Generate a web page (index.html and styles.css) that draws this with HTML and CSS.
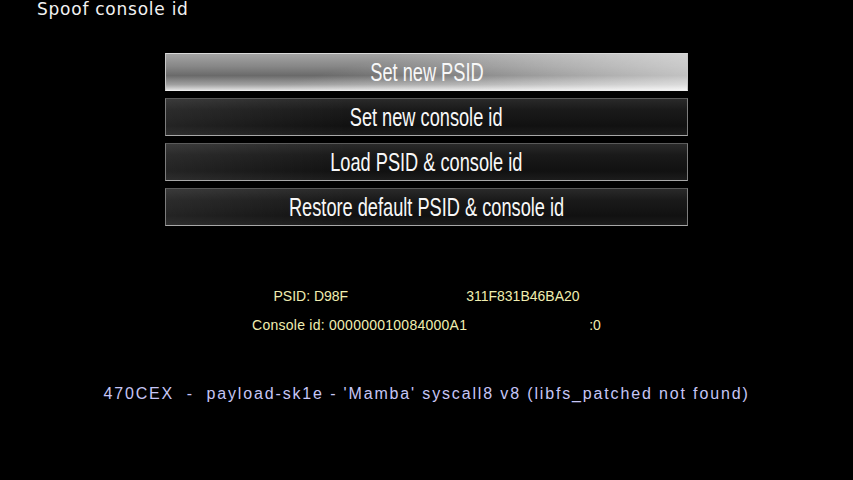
FILE: index.html
```html
<!DOCTYPE html>
<html>
<head>
<meta charset="utf-8">
<link rel="stylesheet" href="styles.css">
</head>
<body>
<div class="screen">
  <div class="title">Spoof console id</div>
  <div class="menu">
    <div class="item selected"><span class="label">Set new PSID</span></div>
    <div class="item"><span class="label">Set new console id</span></div>
    <div class="item"><span class="label">Load PSID &amp; console id</span></div>
    <div class="item"><span class="label">Restore default PSID &amp; console id</span></div>
  </div>
  <div class="info">
    <div class="row psid"><span>PSID: D98F</span><span>311F831B46BA20</span></div>
    <div class="row cid"><span>Console id: 000000010084000A1</span><span>:0</span></div>
  </div>
  <div class="status">470CEX  -  payload-sk1e - 'Mamba' syscall8 v8 (libfs_patched not found)</div>
</div>
</body>
</html>
```
FILE: styles.css
```css
html, body {
  margin: 0;
  padding: 0;
  background: #000;
}
.screen {
  width: 853px;
  height: 480px;
  background: #000;
  overflow: hidden;
  display: flex;
  flex-direction: column;
}
.title {
  font-family: "DejaVu Sans", sans-serif;
  font-size: 17px;
  line-height: 17px;
  color: #f2f2f2;
  padding: 1px 0 0 37px;
  letter-spacing: 0.75px;
}
.menu {
  margin-top: 35px;
  display: flex;
  flex-direction: column;
  align-items: center;
  gap: 7px;
}
.item {
  box-sizing: border-box;
  width: 523px;
  height: 38px;
  border: 1px solid #7c7c7c;
  border-bottom-color: #a8a8a8;
  border-top-color: #5a5a5a;
  background:
    linear-gradient(90deg, rgba(255,255,255,0.08) 0%, rgba(255,255,255,0) 35%),
    linear-gradient(180deg, #2a2a2a 0%, #1a1a1a 30%, #111 75%, #1c1c1c 100%);
  display: flex;
  align-items: center;
  justify-content: center;
}
.item.selected {
  border-color: #c8c8c8;
  border-top-color: #d8d8d8;
  border-bottom-color: #ececec;
  background:
    linear-gradient(165deg, rgba(255,255,255,0) 0%, rgba(255,255,255,0) 35%, rgba(255,255,255,0.55) 100%),
    linear-gradient(90deg, rgba(255,255,255,0) 55%, rgba(255,255,255,0.22) 100%),
    linear-gradient(180deg, #a4a4a4 0%, #868686 35%, #6a6a6a 60%, #a0a0a0 85%, #dedede 100%);
}
.label {
  display: inline-block;
  font-family: "Liberation Sans", Arial, sans-serif;
  font-size: 26px;
  line-height: 30px;
  color: #f8f8f8;
  transform: scaleX(0.70);
  white-space: nowrap;
}
.info {
  margin-top: 62px;
  display: flex;
  flex-direction: column;
  gap: 13px;
  font-family: "Liberation Sans", Arial, sans-serif;
  font-size: 14px;
  line-height: 16px;
  color: #f0eeb0;
}
.row {
  display: flex;
  justify-content: center;
  white-space: nowrap;
}
.psid { gap: 118px; }
.cid { gap: 122px; }
.cid span:first-child { letter-spacing: 0.25px; }
.status {
  margin-top: 52px;
  text-align: center;
  white-space: pre;
  font-family: "Liberation Sans", Arial, sans-serif;
  font-size: 16px;
  line-height: 18px;
  color: #c6c6f6;
  letter-spacing: 1.85px;
}
```
